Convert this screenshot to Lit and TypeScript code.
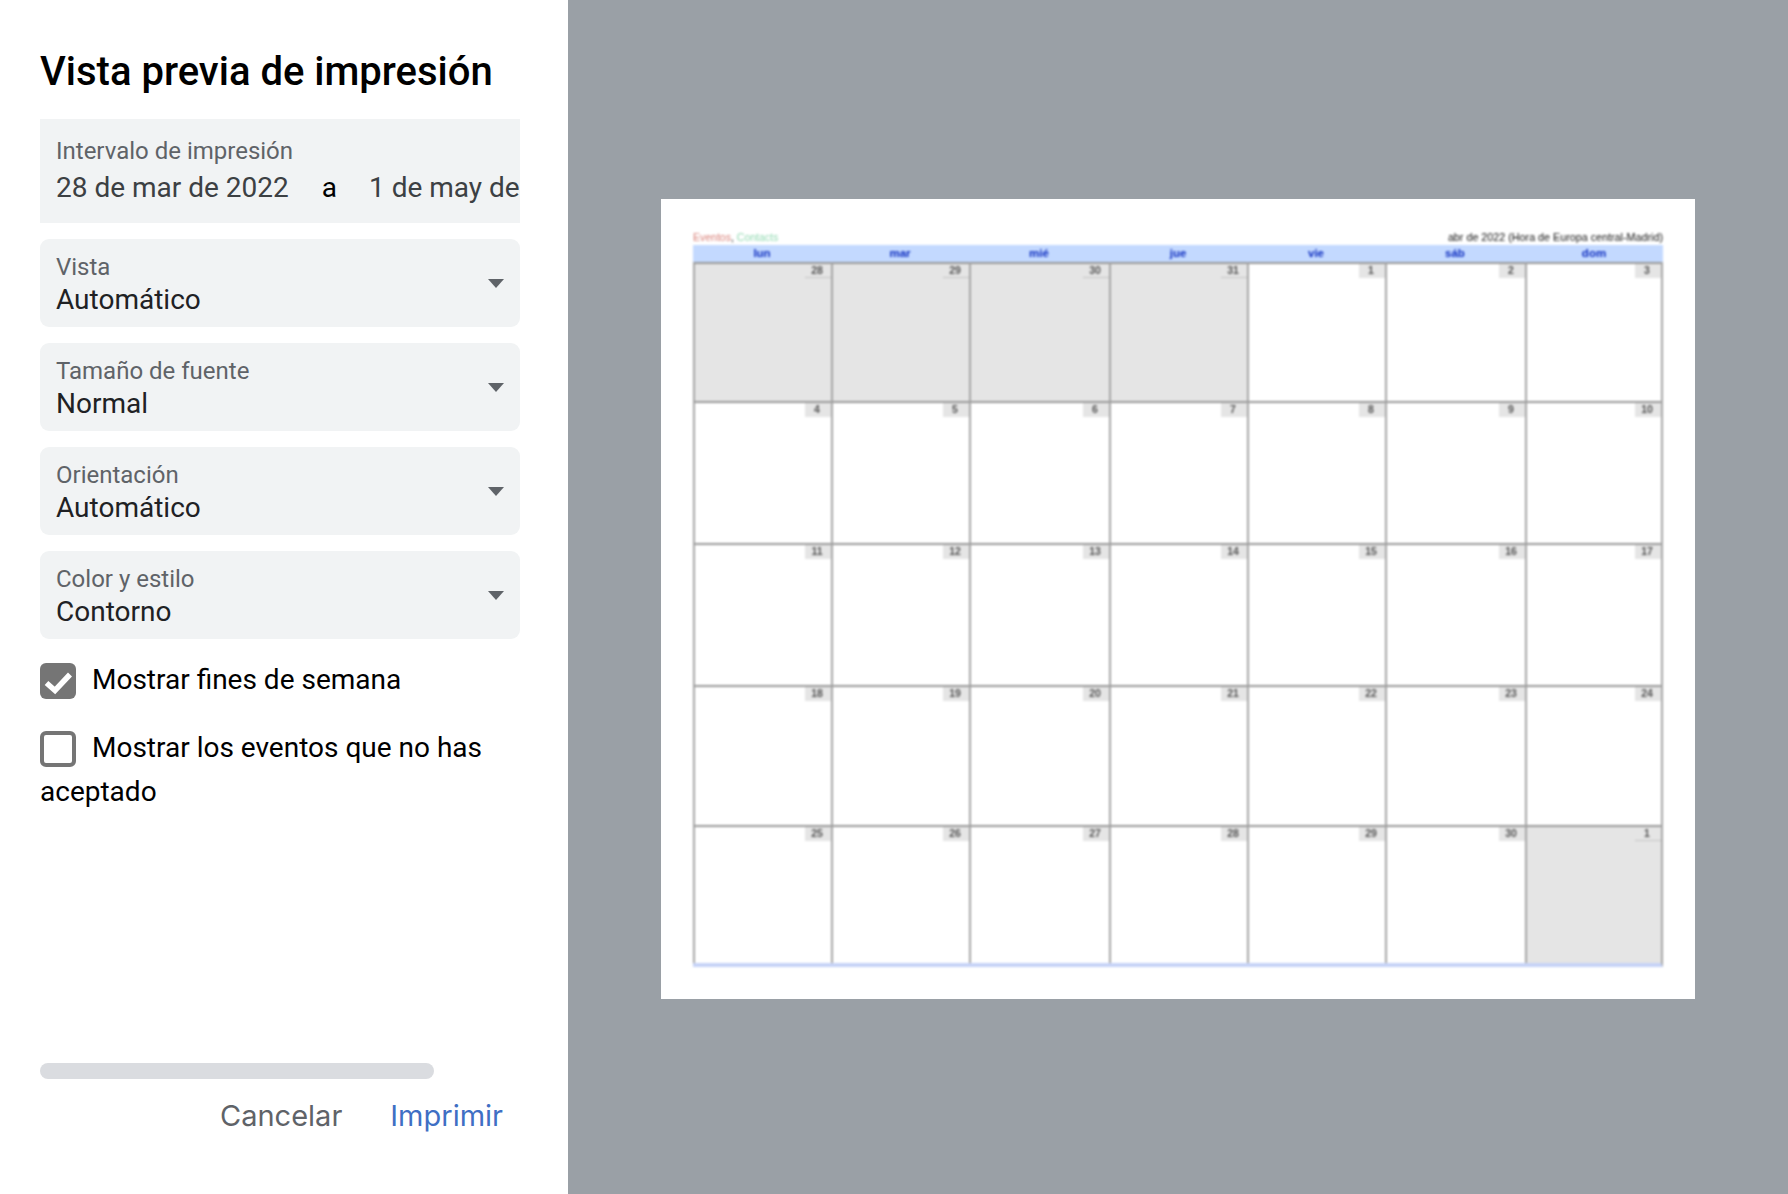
import { LitElement, html, css } from "lit";
import { customElement } from "lit/decorators.js";

const FIELDS = [
  ["Vista", "Automático"],
  ["Tamaño de fuente", "Normal"],
  ["Orientación", "Automático"],
  ["Color y estilo", "Contorno"],
];
const DAYS = ["lun", "mar", "mié", "jue", "vie", "sáb", "dom"];
const DATES = [
  28, 29, 30, 31, 1, 2, 3,
  4, 5, 6, 7, 8, 9, 10,
  11, 12, 13, 14, 15, 16, 17,
  18, 19, 20, 21, 22, 23, 24,
  25, 26, 27, 28, 29, 30, 1,
];

@customElement("app-root")
export class AppRoot extends LitElement {
  static styles = css`
    :host {
      display: flex;
      width: 1788px;
      height: 1194px;
      overflow: hidden;
      font-family: Roboto, "Liberation Sans", sans-serif;
      background: #fff;
    }
    .side {
      width: 568px;
      flex: none;
      box-sizing: border-box;
      padding: 47px 48px 0 40px;
      display: flex;
      flex-direction: column;
      background: #fff;
    }
    h1 {
      margin: 0 0 23px;
      font-size: 40px;
      line-height: 49px;
      font-weight: 500;
      color: #000;
    }
    .range {
      height: 104px;
      box-sizing: border-box;
      padding: 18px 0 0 16px;
      background: #f1f3f4;
      overflow: hidden;
      white-space: nowrap;
      margin-bottom: 16px;
    }
    .lab {
      font-size: 24px;
      line-height: 28px;
      color: #5f6368;
    }
    .dates {
      font-size: 28px;
      line-height: 36px;
      margin-top: 5px;
      color: #3c4043;
      display: flex;
    }
    .to {
      color: #000;
      margin: 0 32px 0 33px;
    }
    .field {
      height: 88px;
      box-sizing: border-box;
      padding: 14px 16px 0;
      background: #f1f3f4;
      border-radius: 9px;
      margin-bottom: 16px;
      display: flex;
      align-items: center;
      justify-content: space-between;
    }
    .field > div { align-self: flex-start; }
    .val {
      font-size: 28px;
      line-height: 34px;
      margin-top: 2px;
      color: #202124;
    }
    .caret {
      width: 16px;
      height: 9px;
      margin: -13px 0 0;
      fill: #5f6368;
    }
    .check {
      font-size: 28px;
      line-height: 44px;
      color: #000;
    }
    .check.first { margin-top: 3px; margin-bottom: 24px; }
    .box {
      display: inline-block;
      width: 36px;
      height: 36px;
      box-sizing: border-box;
      border-radius: 6px;
      vertical-align: -10px;
      margin-right: 16px;
    }
    .box.on { background: #757575; }
    .box.off { border: 4px solid #757575; }
    .box svg { display: block; width: 36px; height: 36px; }
    .bar {
      margin-top: auto;
      width: 394px;
      height: 16px;
      border-radius: 8px;
      background: #dadce0;
    }
    .actions {
      display: flex;
      justify-content: flex-end;
      gap: 48px;
      padding: 18px 17px 0 0;
      height: 115px;
      box-sizing: border-box;
      font-family: Inter, Roboto, sans-serif;
      font-size: 29px;
      line-height: 38px;
    }
    .cancel { color: #5f6368; }
    .print { color: #3f6fc4; }
    .stage {
      flex: 1;
      background: #9aa0a6;
      display: flex;
      align-items: flex-start;
      justify-content: center;
      padding-top: 199px;
    }
    .page {
      width: 1034px;
      height: 800px;
      flex: none;
      box-sizing: border-box;
      background: #fff;
      padding: 30px 32px 0;
      font-family: "Liberation Sans", sans-serif;
    }
    .blurred { filter: blur(0.8px); }
    .top {
      display: flex;
      justify-content: space-between;
      font-size: 10.5px;
      line-height: 16px;
      color: #333;
    }
    .zone { font-size: 10.75px; color: #111; }
    .red { color: #d87f77; }
    .green { color: #8fd8b0; }
    .head, .grid {
      display: grid;
      grid-template-columns: 138px 138px 140px 138px 138px 140px 1fr;
    }
    .head {
      background: #c3d9ff;
      height: 17px;
      line-height: 17px;
      font-size: 11.5px;
      font-weight: 700;
      color: #0f2fc0;
      text-align: center;
    }
    .grid {
      grid-template-rows: 139px 142px 142px 140px 138px;
      border-right: 2px solid #a6a6a6;
      border-bottom: 4px solid #c6d3f7;
    }
    .cell {
      box-sizing: border-box;
      border-top: 2px solid #999;
      border-left: 2px solid #a6a6a6;
      display: flex;
      justify-content: flex-end;
      align-items: flex-start;
    }
    .cell.out { background: #e5e5e5; }
    .chip {
      width: 26px;
      height: 14px;
      box-sizing: border-box;
      padding-right: 2px;
      line-height: 12px;
      font-size: 10.5px;
      font-weight: 700;
      color: #555;
      text-align: center;
      background: #e5e5e5;
    }
    .out .chip { border-bottom: 1px solid #c4c4c4; }
  `;

  render() {
    return html`
      <aside class="side">
        <h1>Vista previa de impresión</h1>
        <div class="range">
          <div class="lab">Intervalo de impresión</div>
          <div class="dates">
            <span>28 de mar de 2022</span><span class="to">a</span><span>1 de may de 2022</span>
          </div>
        </div>
        ${FIELDS.map(
          ([l, v]) => html`
            <div class="field">
              <div>
                <div class="lab">${l}</div>
                <div class="val">${v}</div>
              </div>
              <svg class="caret" viewBox="0 0 16 9"><path d="M0 0h16L8 9z"></path></svg>
            </div>
          `
        )}
        <div class="check first">
          <span class="box on">
            <svg viewBox="0 0 36 36"><path d="M6.5 20l8.5 7.5L30 11.5" fill="none" stroke="#fff" stroke-width="5.5"></path></svg>
          </span>Mostrar fines de semana
        </div>
        <div class="check"><span class="box off"></span>Mostrar los eventos que no has aceptado</div>
        <div class="bar"></div>
        <div class="actions">
          <span class="cancel">Cancelar</span>
          <span class="print">Imprimir</span>
        </div>
      </aside>
      <main class="stage">
        <div class="page">
          <div class="blurred">
            <div class="top">
              <span><span class="red">Eventos</span>, <span class="green">Contacts</span></span>
              <span class="zone">abr de 2022 (Hora de Europa central-Madrid)</span>
            </div>
            <div class="head">${DAYS.map((d) => html`<span>${d}</span>`)}</div>
            <div class="grid">
              ${DATES.map(
                (d, i) => html`
                  <div class="cell ${i < 4 || i === 34 ? "out" : ""}">
                    <span class="chip">${d}</span>
                  </div>
                `
              )}
            </div>
          </div>
        </div>
      </main>
    `;
  }
}
